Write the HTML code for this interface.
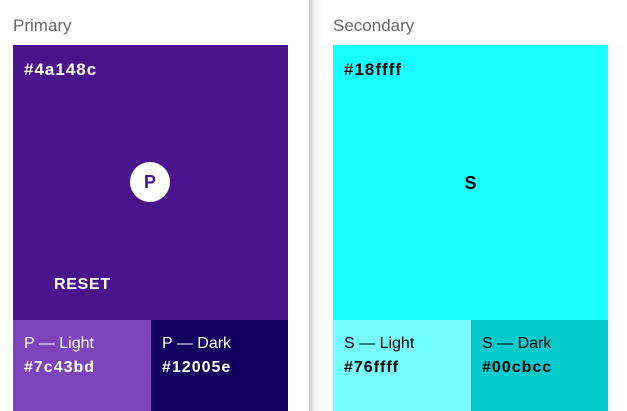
<!DOCTYPE html>
<html><head><style>
*{margin:0;padding:0;box-sizing:border-box}
body{width:627px;height:411px;overflow:hidden;background:#fff;font-family:"Liberation Sans",Arial,sans-serif;position:relative}
.sh{position:absolute;left:309px;top:0;width:14px;height:411px;background:linear-gradient(to right,#c8c8c8,#f2f2f2 40%,#fff)}
.lbl{position:absolute;top:16px;font-size:17px;color:#666}
.box{position:absolute;top:45px;width:275px;height:275px}
.hex{position:absolute;left:11px;top:15px;font-size:17px;font-weight:bold;letter-spacing:1px}
.sub{position:absolute;top:320px;height:91px;width:138px;font-size:16px}
.sub .a{position:absolute;left:11px;top:15px}
.sub .b{position:absolute;left:11px;top:39px;font-weight:bold;letter-spacing:1px}
</style></head><body>
<div class="sh"></div>
<div class="lbl" style="left:13px">Primary</div>
<div class="box" style="left:13px;background:#4a148c;color:#fff">
<div class="hex">#4a148c</div>
<div style="position:absolute;left:117px;top:117px;width:40px;height:40px;border-radius:50%;background:#fff;color:#4a148c;font-weight:bold;font-size:18px;text-align:center;line-height:41px">P</div>
<div style="position:absolute;left:41px;top:231px;font-size:16px;font-weight:bold;letter-spacing:0.7px">RESET</div>
</div>
<div class="sub" style="left:13px;background:#7c43bd;color:#fff"><div class="a">P — Light</div><div class="b">#7c43bd</div></div>
<div class="sub" style="left:151px;width:137px;background:#12005e;color:#fff"><div class="a">P — Dark</div><div class="b">#12005e</div></div>
<div class="lbl" style="left:333px">Secondary</div>
<div class="box" style="left:333px;background:#18ffff;color:#000">
<div class="hex">#18ffff</div>
<div style="position:absolute;left:0;width:275px;top:128px;text-align:center;font-weight:bold;font-size:18px">S</div>
</div>
<div class="sub" style="left:333px;background:#76ffff;color:#000"><div class="a">S — Light</div><div class="b">#76ffff</div></div>
<div class="sub" style="left:471px;width:137px;background:#00cbcc;color:#000"><div class="a">S — Dark</div><div class="b">#00cbcc</div></div>
</body></html>
